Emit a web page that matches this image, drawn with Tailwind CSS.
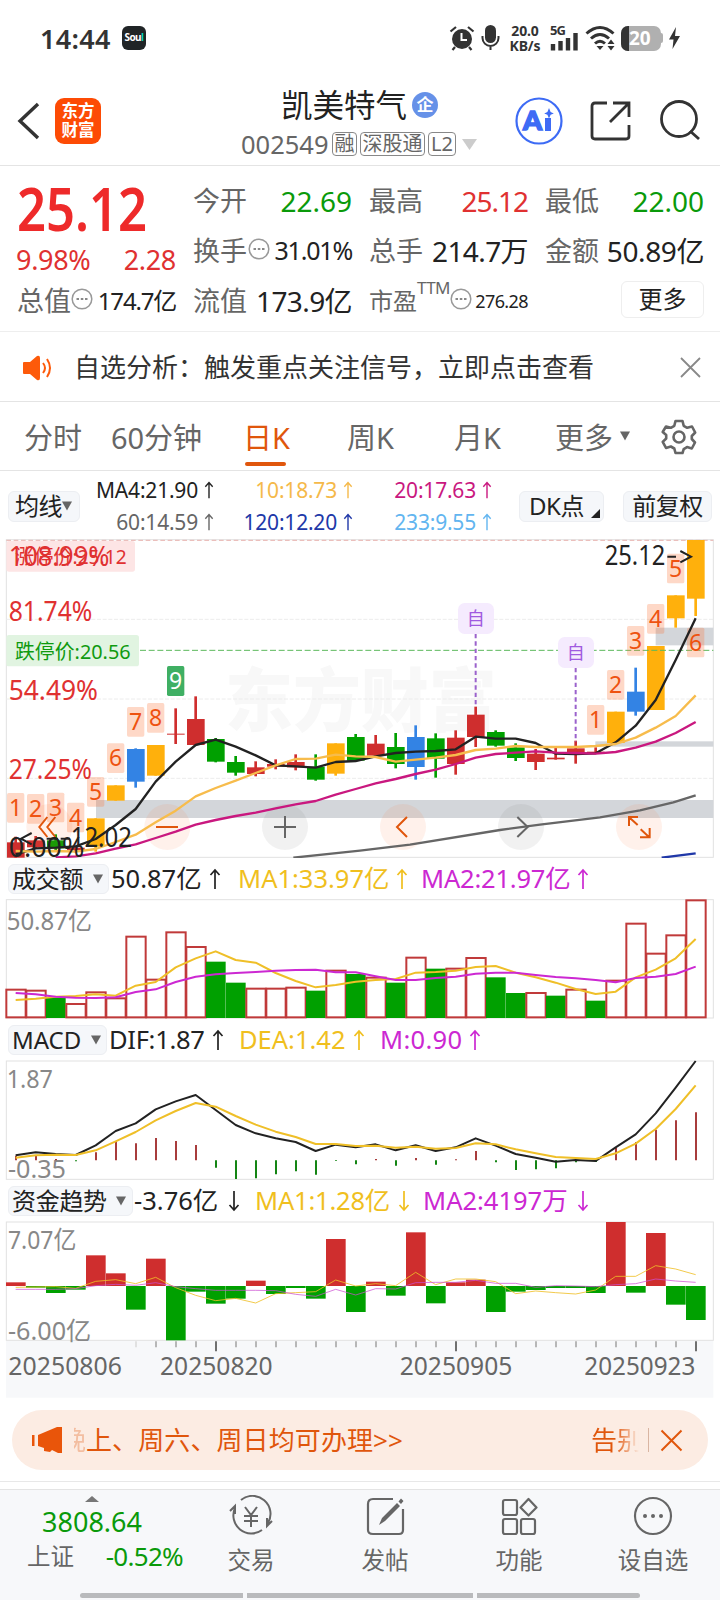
<!DOCTYPE html>
<html lang="zh-CN">
<head>
  <meta charset="UTF-8">
  <title>凯美特气 002549</title>
  <script src="https://cdn.jsdelivr.net/npm/@tailwindcss/browser@4"></script>
</head>
<body class="bg-white font-['Noto_Sans','Noto_Sans_CJK_SC',sans-serif] text-[#222]">
  <!-- Shared icons -->
  <svg class="hidden">
    <symbol id="up" viewBox="0 0 12 22"><path d="M6 21V2M1.500 7 6 2l4.500 5" fill="none" stroke="currentColor" stroke-width="1.700"/></symbol>
    <symbol id="down" viewBox="0 0 12 22"><path d="M6 1v19M1.500 15 6 20l4.500-5" fill="none" stroke="currentColor" stroke-width="1.700"/></symbol>
    <symbol id="caret" viewBox="0 0 10 9"><path d="M0 0h10L5 9z" fill="currentColor"/></symbol>
    <symbol id="more" viewBox="0 0 22 22"><circle cx="11" cy="11" r="9.800" fill="none" stroke="#999" stroke-width="1.500"/><path d="M5.500 11h2.500M9.800 11h2.500M14 11h2.500" stroke="#888" stroke-width="2.200"/></symbol>
  </svg>

  <div class="flex flex-col w-[720px] h-[1600px] overflow-hidden whitespace-nowrap">
    <!-- Status bar -->
    <div class="flex items-center h-[76px] pl-[40px] pr-[38px] text-[#333] shrink-0">
      <span class="text-[27px] font-semibold tracking-[0.3px] leading-none w-[82px]">14:44</span>
      <div class="w-[24px] h-[24px] rounded-md bg-[#202426] text-white text-[10px] font-bold leading-[23px] text-center tracking-[-0.6px]">Sou<span class="text-teal-400">l</span></div>
      <svg class="ml-[303px] w-[26px] h-[26px]" viewBox="0 0 26 26">
        <circle cx="13" cy="14" r="10" fill="#333"/>
        <path d="M1.500 6.500 7 2M24.500 6.500 19 2M6 22l-2.500 3M20 22l2.500 3" stroke="#333" stroke-width="2.200" fill="none"/>
        <path d="M12.500 8v7h5.500" stroke="#fff" stroke-width="2" fill="none"/>
      </svg>
      <svg class="ml-[6px] w-[19px] h-[26px]" viewBox="0 0 19 26">
        <rect x="4" y="0" width="11" height="18" rx="5.500" fill="#333"/>
        <path d="M1.500 11v2a8 8 0 0 0 16 0v-2M9.500 21v4" stroke="#333" stroke-width="2" fill="none"/>
      </svg>
      <div class="ml-[8px] w-[34px] text-center text-[14px] font-bold leading-[15px] tracking-[-0.1px]">20.0<br>KB/s</div>
      <svg class="ml-[8px] w-[30px] h-[28px] overflow-visible" viewBox="0 0 30 28">
        <text x="0" y="11" font-size="13" font-weight="700" fill="#333" textLength="16">5G</text>
        <path d="M3 20v6.500M10.500 17v9.500M18 14v12.500M25.500 9v17.500" stroke="#333" stroke-width="4.400"/>
      </svg>
      <svg class="ml-[5px] w-[31px] h-[27px]" viewBox="0 0 31 27">
        <path d="M1.500 8.500q13.500-12 27 0M6 13.500q9-8 18 0M10 18.500q5-4.500 10 0" stroke="#333" stroke-width="3" fill="none"/>
        <path d="m15 25-3.500-4h7zM26 14.500l3.500 4.500h-7zM26 25.500l3.500-4.500h-7z" fill="#333"/>
      </svg>
      <div class="ml-[5px] flex w-[40px] h-[25px] rounded-[7px] bg-[#b0b0b0] overflow-hidden text-white text-[19px] font-bold leading-[25px]">
        <div class="w-[8px] bg-[#333]"></div><span>20</span>
      </div>
      <div class="w-[2px] h-[10px] bg-[#b0b0b0] rounded-r"></div>
      <svg class="ml-[6px] w-[11px] h-[22px]" viewBox="0 0 11 22"><path d="M7 0 0 12.500h4.500L3.500 22 11 9H6z" fill="#333"/></svg>
    </div>

    <!-- Title bar -->
    <div class="flex h-[90px] border-b border-[#e4e4e4] shrink-0">
      <svg class="ml-[17px] mt-[26px] w-[24px] h-[38px]" viewBox="0 0 24 38"><path d="M21 2 3 19l18 17" fill="none" stroke="#333" stroke-width="3.400"/></svg>
      <div class="ml-[14px] mt-[22px] w-[46px] h-[46px] rounded-[9px] bg-[#fd4b05] text-white text-[16.500px] font-bold leading-[18.500px] text-center pt-[4px]">东方<br>财富</div>
      <div class="ml-[140px] w-[239px]">
        <div class="flex items-center ml-[40px] h-[44px] mt-[7px]">
          <span class="text-[31.500px] leading-none">凯美特气</span>
          <span class="ml-[5px] w-[26px] h-[26px] rounded-full bg-[#6691e8] text-white text-[17px] font-bold leading-[25px] text-center">企</span>
        </div>
        <div class="flex items-center h-[34px] text-[#666]">
          <span class="text-[25.500px] w-[91px]">002549</span>
          <span class="w-[25px] h-[24px] border border-[#888] rounded text-[20px] leading-[21px] text-center">融</span>
          <span class="ml-[3px] w-[65px] h-[24px] border border-[#888] rounded text-[20px] leading-[21px] text-center">深股通</span>
          <span class="ml-[3px] w-[28px] h-[24px] border border-[#888] rounded text-[20px] leading-[21px] text-center">L2</span>
          <svg class="ml-[6px] w-[15px] h-[11px] text-[#ccc]" viewBox="0 0 10 9" preserveAspectRatio="none"><path d="M0 0h10L5 9z" fill="currentColor"/></svg>
        </div>
      </div>
      <svg class="ml-[34px] mt-[21px] w-[50px] h-[50px]" viewBox="0 0 50 50">
        <circle cx="25" cy="24" r="22.500" fill="none" stroke="#3d6bf5" stroke-width="2.200"/>
        <text x="9" y="33" font-size="27" font-weight="900" fill="#3d6bf5" stroke="#3d6bf5" stroke-width="1.500" font-family="Lato" textLength="19" lengthAdjust="spacingAndGlyphs">A</text>
        <path d="M34 21v13" stroke="#3d6bf5" stroke-width="6"/><path d="m35 11 1.600 4 3.200 1.400-3.200 1.400L35 21.500l-1.600-3.700-3.200-1.400 3.200-1.400z" fill="#3d6bf5"/>
      </svg>
      <svg class="ml-[26px] mt-[25px] w-[42px] h-[42px]" viewBox="0 0 42 42" fill="none" stroke="#333" stroke-width="2.800"><path d="M17 2H5Q2 2 2 5v30q0 3 3 3h31q3 0 3-3V24M23 2h16v14M39 2 20 21"/></svg>
      <svg class="ml-[27px] mt-[23px] w-[44px] h-[44px]" viewBox="0 0 44 44" fill="none" stroke="#333" stroke-width="2.800"><circle cx="20" cy="20" r="17.500"/><path d="m31 32 9 8"/></svg>
    </div>

    <!-- Quote -->
    <div class="h-[166px] border-b border-[#eee] px-[17px] grid grid-cols-[159px_159px_159px_159px] gap-x-[17px] shrink-0 text-[#666]">
      <div class="flex flex-col text-[#ee2a2a]">
        <div class="h-[68px] pt-[14px]"><div class="text-[59px] font-semibold leading-[56px] origin-left scale-x-[0.86] w-[150px]">25.12</div></div>
        <div class="flex justify-between items-center h-[50px] pt-[2px] text-[27px] text-[#e03131] tracking-[-0.3px]"><span class="-ml-px">9.98%</span><span>2.28</span></div>
        <div class="flex items-center h-[34px] text-[#666] text-[27px]">总值<svg class="w-[22px] h-[22px] -mt-1"><use href="#more"/></svg><span class="ml-auto text-[24px] text-[#222] tracking-[-1.200px]">174.7亿</span></div>
      </div>
      <div class="flex flex-col pt-[10px] text-[27px]">
        <div class="flex justify-between items-center h-[50px]">今开<span class="text-[#0a9a0a] text-[28px]">22.69</span></div>
        <div class="flex items-center h-[50px]">换手<svg class="ml-px w-[22px] h-[22px] -mt-1"><use href="#more"/></svg><span class="ml-auto text-[25px] text-[#222] tracking-[-1.200px]">31.01%</span></div>
        <div class="flex justify-between items-center h-[50px]">流值<span class="text-[28px] text-[#222] tracking-[-0.6px]">173.9亿</span></div>
      </div>
      <div class="flex flex-col pt-[10px] text-[27px]">
        <div class="flex justify-between items-center h-[50px]">最高<span class="text-[#e03131] text-[28px] tracking-[-1px]">25.12</span></div>
        <div class="flex justify-between items-center h-[50px]">总手<span class="text-[28px] text-[#222] tracking-[-0.6px]">214.7万</span></div>
        <div class="flex items-center h-[50px] text-[24px]">市盈<span class="text-[17px] -mt-[26px] tracking-[-0.6px]">TTM</span><svg class="w-[22px] h-[22px] -mt-1"><use href="#more"/></svg><span class="ml-auto text-[18px] text-[#222] tracking-[-0.6px]">276.28</span></div>
      </div>
      <div class="flex flex-col pt-[10px] text-[27px]">
        <div class="flex justify-between items-center h-[50px]">最低<span class="text-[#0a9a0a] text-[28px]">22.00</span></div>
        <div class="flex justify-between items-center h-[50px]">金额<span class="text-[28px] text-[#222] tracking-[-0.4px]">50.89亿</span></div>
        <div class="ml-auto mt-[5px] w-[83px] h-[37px] border border-[#eee] rounded-md text-[24px] leading-[33px] text-center text-[#222]">更多</div>
      </div>
    </div>

    <!-- Signal notice -->
    <div class="flex items-center h-[70px] border-b border-[#e4e4e4] pl-[22px] pr-[19px] pt-[2px] shrink-0">
      <svg class="w-[31px] h-[26px]" viewBox="0 0 31 26"><path d="M1 8q0-1 1-1h6l7-6q3-1 3 2v20q0 3-3 2l-7-6H2q-1 0-1-1z" fill="#fd5a0a"/><path d="M21 8q4 5 0 10M25 4q6 9 0 18" stroke="#fd5a0a" stroke-width="2" fill="none"/></svg>
      <span class="ml-[21px] text-[26px] text-[#333]">自选分析：触发重点关注信号，立即点击查看</span>
      <svg class="ml-auto w-[21px] h-[21px]" viewBox="0 0 21 21"><path d="m1 1 19 19M20 1 1 20" stroke="#888" stroke-width="1.800"/></svg>
    </div>

    <!-- Period tabs -->
    <div class="flex items-center h-[69px] border-b border-[#e4e4e4] pl-[24px] shrink-0 text-[29px] text-[#666]">
      <span class="w-[87px] pt-[3px]">分时</span>
      <span class="w-[132px] pt-[3px] tracking-[-0.1px]">60分钟</span>
      <div class="w-[104px] h-full flex flex-col text-[#e0560c]"><span class="h-[60px] leading-[71px]">日K</span><div class="ml-[2px] w-[41px] h-[4px] rounded bg-[#e0560c]"></div></div>
      <span class="w-[107px] pt-[3px]">周K</span>
      <span class="w-[101px] pt-[3px]">月K</span>
      <span class="w-[65px] pt-[3px]">更多</span>
      <svg class="w-[10px] h-[10px]"><use href="#caret"/></svg>
      <svg class="ml-[31px] mt-[2px] w-[36px] h-[36px]" viewBox="0 0 36 36" fill="none" stroke="#666" stroke-width="2.600" stroke-linejoin="round"><path d="M14.500 2h7l1.200 4.800 3.500 2 4.800-1.300 3.200 6-3.400 3.500v3l3.200 3.500-3.200 6-4.800-1.400-3.300 2L21.500 34h-7l-1.200-4.500-3.500-2L5 28.900l-3.300-6 3.500-3.400v-3.500L1.700 13l3.300-5.500 4.800 1.300 3.500-2z"/><circle cx="18" cy="18" r="5.500"/></svg>
    </div>

    <!-- Moving averages -->
    <div class="flex items-center h-[68px] shrink-0 pl-[8px]">
      <div class="flex items-center w-[72px] h-[31px] mt-[2px] rounded-md bg-[#f5f7fa] border border-[#eceef2] pl-[6px] text-[24px] tracking-[-0.5px]">均线<svg class="w-[10px] h-[10px] text-[#666]"><use href="#caret"/></svg></div>
      <div class="w-[414px] grid grid-cols-[134px_139px_139px] text-right text-[21px] leading-[32px] tracking-[-0.2px] pt-[1px]">
        <div>MA4:21.90<svg class="inline -mt-1 ml-[6px] w-[10px] h-[18px]"><use href="#up"/></svg></div>
        <div class="text-[#f5b94a]">10:18.73<svg class="inline -mt-1 ml-[6px] w-[10px] h-[18px]"><use href="#up"/></svg></div>
        <div class="text-[#c9187f]">20:17.63<svg class="inline -mt-1 ml-[6px] w-[10px] h-[18px]"><use href="#up"/></svg></div>
        <div class="text-[#666]">60:14.59<svg class="inline -mt-1 ml-[6px] w-[10px] h-[18px]"><use href="#up"/></svg></div>
        <div class="text-[#2038a8]">120:12.20<svg class="inline -mt-1 ml-[6px] w-[10px] h-[18px]"><use href="#up"/></svg></div>
        <div class="text-[#62b5f0]">233:9.55<svg class="inline -mt-1 ml-[6px] w-[10px] h-[18px]"><use href="#up"/></svg></div>
      </div>
      <div class="flex items-center ml-[25px] mt-[2px] w-[85px] h-[31px] rounded-md bg-[#f5f7fa] border border-[#eceef2] pl-[9px] text-[24px] tracking-[-0.4px]">DK点<svg class="ml-[7px] mt-[14px] w-[9px] h-[9px]" viewBox="0 0 9 9"><path d="M9 0v9H0z" fill="#222"/></svg></div>
      <div class="ml-[19px] mt-[2px] w-[89px] h-[31px] rounded-md bg-[#f5f7fa] border border-[#eceef2] text-[24px] leading-[27px] text-center tracking-[-0.5px]">前复权</div>
    </div>

    <!-- Candles, three units per pixel -->
    <svg class="w-[720px] h-[319px] shrink-0" viewBox="0 12 2160 957" id="kline"></svg>

    <!-- Turnover -->
    <div class="flex items-center h-[41px] shrink-0 pl-[8px] text-[25.500px]">
      <div class="flex items-center w-[101px] h-[30px] rounded-md bg-[#f5f7fa] border border-[#eceef2] pl-[3px] text-[24px] tracking-[-0.3px]">成交额<svg class="ml-auto mr-[5px] w-[10px] h-[10px] text-[#666]"><use href="#caret"/></svg></div>
      <div class="flex items-center ml-[2px] w-[127px]">50.87亿<svg class="ml-[7px] w-[12px] h-[22px]"><use href="#up"/></svg></div>
      <div class="flex items-center w-[183px] text-[#f0bf1e]">MA1:33.97亿<svg class="ml-[6px] w-[12px] h-[22px]"><use href="#up"/></svg></div>
      <div class="flex items-center text-[#cc28d2] tracking-[-0.2px]">MA2:21.97亿<svg class="ml-[6px] w-[12px] h-[22px]"><use href="#up"/></svg></div>
    </div>
    <svg class="w-[720px] h-[120px] shrink-0" viewBox="0 118 2160 360" id="volume"></svg>

    <!-- MACD -->
    <div class="flex items-center h-[41px] shrink-0 pl-[8px] text-[25.500px]">
      <div class="flex items-center w-[99px] h-[30px] rounded-md bg-[#f5f7fa] border border-[#eceef2] pl-[3px] text-[24px]">MACD<svg class="ml-auto mr-[5px] w-[10px] h-[10px] text-[#666]"><use href="#caret"/></svg></div>
      <div class="flex items-center ml-[2px] w-[130px] tracking-[-0.3px]">DIF:1.87<svg class="ml-[7px] w-[12px] h-[22px]"><use href="#up"/></svg></div>
      <div class="flex items-center w-[141px] text-[#f0bf1e]">DEA:1.42<svg class="ml-[7px] w-[12px] h-[22px]"><use href="#up"/></svg></div>
      <div class="flex items-center text-[#cc28d2] tracking-[0.3px]">M:0.90<svg class="ml-[7px] w-[12px] h-[22px]"><use href="#up"/></svg></div>
    </div>
    <svg class="w-[720px] h-[120px] shrink-0" viewBox="0 600 2160 360" id="macd"></svg>

    <!-- Fund flow -->
    <div class="flex items-center h-[41px] shrink-0 pl-[8px] text-[25.500px]">
      <div class="flex items-center w-[125px] h-[30px] rounded-md bg-[#f5f7fa] border border-[#eceef2] pl-[3px] text-[24px] tracking-[-0.3px]">资金趋势<svg class="ml-auto mr-[6px] w-[10px] h-[10px] text-[#666]"><use href="#caret"/></svg></div>
      <div class="flex items-center ml-[1px] w-[121px]">-3.76亿<svg class="ml-[10px] w-[12px] h-[22px]"><use href="#down"/></svg></div>
      <div class="flex items-center w-[168px] text-[#f0bf1e] tracking-[-0.2px]">MA1:1.28亿<svg class="ml-[8px] w-[12px] h-[22px]"><use href="#down"/></svg></div>
      <div class="flex items-center text-[#cc28d2]">MA2:4197万<svg class="ml-[9px] w-[12px] h-[22px]"><use href="#down"/></svg></div>
    </div>
    <svg class="w-[720px] h-[177px] shrink-0" viewBox="0 123 2160 531" id="fund"></svg>

    <!-- Promo -->
    <div class="flex items-center mx-[12px] mt-[12px] h-[60px] rounded-full bg-[#fcece3] text-[#e0560c] text-[26px] shrink-0">
      <svg class="ml-[20px] w-[30px] h-[28px]" viewBox="0 0 30 28" fill="#e9550a"><path d="M0 9h2.500v11H0zM6 9l19-8h5v26h-4l-6-3-2 2-6-1v-3l-6-2z"/></svg>
      <div class="ml-[12px] w-[12px] flex justify-end overflow-hidden opacity-30">晚</div>
      <span class="tracking-[0.1px]">上、周六、周日均可办理&gt;&gt;</span>
      <div class="ml-auto flex w-[48px] overflow-hidden bg-linear-to-r from-[#e0560c] from-50% to-transparent bg-clip-text text-transparent">告别</div>
      <div class="ml-[9px] w-px h-[24px] bg-[#d9b5a2]"></div>
      <svg class="ml-[11px] mr-[25px] w-[23px] h-[23px]" viewBox="0 0 23 23"><path d="m1.500 1.500 20 20M21.500 1.500l-20 20" stroke="#e0560c" stroke-width="2"/></svg>
    </div>

    <!-- Bottom bar -->
    <div class="mt-[11px] h-[8px] border-t border-[#e8e8e8] shrink-0"></div>
    <div class="relative flex h-[111px] bg-[#f7f8fa] border-t border-[#e4e4e4] shrink-0 text-[#666] text-[23.500px]">
      <div class="w-[184px] flex flex-col items-center text-[#0a9a0a]">
        <svg class="mt-[6px] w-[14px] h-[6px]" viewBox="0 0 14 6"><path d="M7 0l7 6H0z" fill="#777"/></svg>
        <span class="h-[36px] leading-[40px] text-[27px]">3808.64</span>
        <div class="flex justify-between w-[156px] leading-[36px] ml-[26px]"><span class="text-[#666]">上证</span><span class="text-[26px] tracking-[-0.7px]">-0.52%</span></div>
      </div>
      <div class="w-[134px] flex flex-col items-center">
        <svg class="mt-[5px] w-[46px] h-[42px]" viewBox="0 0 46 42" fill="none" stroke="#666" stroke-width="2"><path d="M13 5A18 18 0 0 1 40 28m4-2-5 5v-8M34 35A18 18 0 0 1 7 13m-5 3 5-5v8M17 12l6 8 6-8M23 20v12M16 21h14M16 26h14"/></svg>
        <span class="leading-[47px]">交易</span>
      </div>
      <div class="w-[134px] flex flex-col items-center">
        <svg class="mt-[5px] w-[40px] h-[42px]" viewBox="0 0 40 42" fill="none" stroke="#666" stroke-width="2.200"><path d="M28 4H8Q3 4 3 9v26q0 4 5 4h26q4 0 4-4V14"/><path d="m14 30 3-7L32 8l3 3-15 15zM33.500 6.500 36 3.500l2.500 2.500-2.500 3z" fill="#666" stroke="none"/></svg>
        <span class="leading-[47px]">发帖</span>
      </div>
      <div class="w-[134px] flex flex-col items-center">
        <svg class="mt-[5px] w-[38px] h-[42px]" viewBox="0 0 38 42" fill="none" stroke="#666" stroke-width="2.200"><rect x="3" y="5" width="14" height="15" rx="2"/><rect x="3" y="24" width="14" height="15" rx="2"/><rect x="21" y="24" width="14" height="15" rx="2"/><path d="m28.500 4 8 8.500-8 8-8-8z" stroke-linejoin="round"/></svg>
        <span class="leading-[47px]">功能</span>
      </div>
      <div class="w-[134px] flex flex-col items-center">
        <svg class="mt-[5px] w-[42px] h-[42px]" viewBox="0 0 42 42" fill="none" stroke="#666" stroke-width="2.200"><circle cx="21" cy="21" r="18"/><path d="M13 21h.01M21 21h.01M29 21h.01" stroke-width="4" stroke-linecap="round"/></svg>
        <span class="leading-[47px]">设自选</span>
      </div>
      <div class="absolute left-[80px] bottom-[2px] w-[560px] h-[5px] grid grid-cols-[163px_226px_163px] gap-[4px]">
        <div class="bg-[#b9babc] rounded-l-full"></div><div class="bg-[#b9babc]"></div><div class="bg-[#b9babc] rounded-r-full"></div>
      </div>
    </div>
  </div>

  <script>
    const RED = '#cf2e2e', GREEN = '#00a000', GOLD = '#ffb00c', BLUE = '#3383e4';
    const cx = i => 47 + i * 60;
    const rect = (x, y, w, h, fill, extra = '') => `<rect x="${x}" y="${y}" width="${w}" height="${h}" fill="${fill}" ${extra}/>`;
    const seg = (x1, y1, x2, y2, stroke, w = 3, extra = '') => `<line x1="${x1}" y1="${y1}" x2="${x2}" y2="${y2}" stroke="${stroke}" stroke-width="${w}" ${extra}/>`;
    const series = (ys, stroke, w = 6, from = 0) => `<polyline points="${ys.map((y, i) => cx(i + from) + ',' + y).join(' ')}" fill="none" stroke="${stroke}" stroke-width="${w}" stroke-linejoin="round"/>`;
    const label = (x, y, w, s, fill, size = 80, extra = '') => `<text x="${x}" y="${y}" font-size="${size}" fill="${fill}" textLength="${w}" lengthAdjust="spacingAndGlyphs" ${extra}>${s}</text>`;
    const frame = (top, bottom) => rect(19, top, 2121, bottom - top, 'none', 'stroke="#e2e2e2" stroke-width="3"');

    // color, body top, body bottom, high, low
    const candles = [
      [RED, 922, 968, 905, 968], [RED, 916, 937, 903, 942], [GREEN, 916, 940, 898, 946], [RED, 938, 946, 932, 952],
      [GOLD, 850, 935, 850, 950], [GOLD, 751, 797, 751, 797], [BLUE, 642, 740, 640, 758], [GOLD, 630, 722, 630, 722],
      [RED, 596, 599, 520, 627], [RED, 552, 630, 484, 630], [GREEN, 612, 680, 609, 682], [GREEN, 681, 713, 663, 722],
      [RED, 697, 717, 679, 724], [RED, 687, 695, 673, 703], [RED, 681, 697, 658, 706], [GREEN, 695, 734, 658, 737],
      [GOLD, 625, 716, 625, 722], [GREEN, 606, 677, 597, 677], [RED, 626, 662, 600, 665], [GREEN, 636, 687, 594, 700],
      [BLUE, 606, 696, 571, 734], [GREEN, 610, 671, 595, 728], [RED, 608, 687, 586, 719], [RED, 539, 606, 515, 636],
      [GREEN, 591, 632, 586, 635], [GREEN, 637, 669, 625, 678], [RED, 656, 681, 642, 705], [RED, 668, 673, 638, 674],
      [RED, 640, 655, 617, 686], [RED, 650, 655, 637, 655], [GOLD, 530, 624, 530, 624], [BLUE, 470, 530, 398, 542],
      [GOLD, 333, 525, 333, 525], [GOLD, 181, 250, 181, 278], [GOLD, 15, 191, 15, 243]
    ];
    const marks = [[0, 774, 1], [1, 777, 2], [2, 773, 3], [3, 803, 4], [4, 726, 5], [5, 625, 6], [6, 516, 7], [7, 504, 8],
      [29, 510, 1], [30, 405, 2], [31, 273, 3], [32, 207, 4], [33, 56, 5], [34, 278, 6]];

    let k = label(675, 572, 815, '东方财富', '#f8f8f8', 208, 'font-weight="900"');
    k += frame(14, 967);
    [253, 492, 730].forEach(y => k += seg(19, y, 2140, y, '#ececec', 3, 'stroke-dasharray="12 5"'));
    k += seg(19, 16, 2140, 16, '#e8b4b0', 3, 'stroke-dasharray="14 8"');
    k += rect(19, 18, 386, 92, '#fde5e5', 'rx="8"') + label(45, 87, 335, '涨停价:25.12', '#e03131', 62);
    k += rect(288, 795, 1852, 54, '#d3d6da') + rect(1786, 619, 354, 16, '#d3d6da') + rect(1967, 278, 173, 53, '#d3d6da');
    candles.forEach(([c, t, b, h, l], i) => k += seg(cx(i), h, cx(i), l, c, 8) + rect(cx(i) - 26, t, 53, b - t, c));
    k += seg(420, 346, 2140, 346, '#5cb85c', 3, 'stroke-dasharray="18 8"');
    k += rect(19, 300, 398, 94, '#e1f4e1', 'rx="8"') + label(45, 371, 347, '跌停价:20.56', '#0f9a0f', 62);
    marks.forEach(([i, y, n]) => k += rect(cx(i) - 26, y, 52, 89, '#fb7436', 'rx="5" fill-opacity=".28"') + `<text x="${cx(i)}" y="${y + 69}" font-size="69" text-anchor="middle" fill="#ee5210">${n}</text>`);
    k += rect(501, 393, 52, 90, '#3faf63', 'rx="5"') + '<text x="527" y="462" font-size="69" text-anchor="middle" fill="#fff">9</text>';
    // tool buttons
    [148, 502, 855, 1209, 1563, 1917].forEach((x, i) => k += `<circle cx="${x}" cy="876" r="69" fill="${i === 2 || i === 4 ? '#777' : '#fb7436'}" fill-opacity=".1"/>`);
    k += '<g fill="none" stroke="#e0560c" stroke-width="6"><path d="M142 846l-24 30 24 30M166 846l-24 30 24 30M468 876h66M1221 846l-30 30 30 30M1887 873v-27h27M1889 848l24 22M1949 879v28h-29M1946 905l-24-22"/></g>';
    k += '<path d="M822 876h66M855 843v66M1552 846l31 30-31 30" fill="none" stroke="#666" stroke-width="6"/>';
    k += '<polyline points="880,968 1080,947 1230,929 1500,885 1620,869 1800,847 1920,826 2020,802 2087,781" fill="none" stroke="#666" stroke-width="7"/>';
    k += seg(1985, 968, 2087, 955, '#2038a8', 7);
    k += series([958, 940, 938, 934, 912, 870, 822, 740, 680, 630, 614, 635, 661, 691, 694, 698, 681, 678, 664, 654, 650, 648, 643, 605, 611, 611, 624, 656, 657, 655, 622, 572, 495, 375, 250], '#222', 7);
    k += series([948, 950, 948, 950, 942, 921, 899, 862, 827, 784, 759, 737, 714, 691, 672, 671, 659, 664, 666, 680, 674, 668, 660, 645, 641, 633, 636, 636, 636, 633, 627, 608, 578, 543, 481], '#f7bc4c', 7);
    k += series([967, 964, 955, 941, 928, 909, 890, 869, 855, 843, 833, 820, 808, 798, 779, 762, 745, 732, 717, 704, 687, 668, 657, 653, 649, 653, 654, 656, 651, 638, 620, 594, 561], '#c9187f', 7, 2);
    [[1427, 204, 515], [1727, 306, 620]].forEach(([x, y, end]) => k += rect(x - 53, y, 108, 93, '#f5ebfe', 'rx="20"')
      + `<text x="${x}" y="${y + 67}" font-size="54" text-anchor="middle" fill="#a05ae0">自</text>` + seg(x, y + 93, x, end, '#9b62cc', 6, 'stroke-dasharray="13 9"'));
    k += label(26, 92, 302, '108.99%', '#e03131') + label(26, 257, 251, '81.74%', '#e03131') + label(26, 494, 268, '54.49%', '#e03131') + label(26, 733, 250, '27.25%', '#e03131') + label(26, 965, 227, '0.00%', '#222');
    k += label(212, 935, 184, '12.02', '#222') + label(1814, 91, 182, '25.12', '#222');
    k += '<path d="M95 894l-32 17 32 17M140 911h34M182 911h28M2002 65h26M2041 48l32 17-32 17" fill="none" stroke="#222" stroke-width="6"/>';
    document.getElementById('kline').innerHTML = k;

    // turnover
    const vol = [390, 393, -414, 433, 398, 416, 231, 360, 218, 262, -306, -369, 387, 387, 384, -393, 333, -343, 354, -369, 294, -327, 327, 295, -353, -400, 400, -408, 390, -423, 363, 192, 282, 227, 122];
    let v = frame(120, 475);
    vol.forEach((t, i) => v += t < 0 ? rect(cx(i) - 29, -t, 59, 475 + t, GREEN) : rect(cx(i) - 28, t, 58, 473 - t, '#fff', 'stroke="#c03a3a" stroke-width="6"'));
    v += series([421, 417, 411, 409, 404, 408, 378, 367, 323, 296, 275, 301, 309, 340, 364, 383, 376, 366, 361, 358, 339, 337, 333, 322, 319, 339, 353, 369, 388, 403, 396, 353, 330, 296, 238], '#efbf28');
    v += series([400, 404, 411, 414, 415, 413, 397, 389, 367, 351, 344, 340, 337, 333, 331, 330, 338, 338, 350, 361, 361, 355, 351, 342, 339, 339, 346, 352, 356, 361, 368, 355, 351, 343, 321], '#cc28d2');
    v += label(20, 210, 256, '50.87亿', '#888', 76);
    document.getElementById('volume').innerHTML = v;

    // macd
    const hist = [887, 887, 897, 904, 877, 843, 850, 834, 843, 855, 923, 957, 955, 943, 934, 944, 903, 913, 897, 917, 894, 914, 898, 873, 907, 930, 928, 925, 907, 906, 864, 846, 809, 781, 757];
    let m = frame(603, 958) + label(20, 685, 139, '1.87', '#888', 76) + label(24, 954, 174, '-0.35', '#888', 76);
    hist.forEach((y, i) => m += seg(cx(i) + 1, 901, cx(i) + 1, y, y < 901 ? '#a83c3c' : '#148514', 6));
    m += series([886, 877, 882, 885, 856, 813, 790, 748, 724, 705, 750, 795, 820, 835, 846, 873, 854, 862, 853, 871, 856, 873, 862, 835, 857, 882, 893, 905, 900, 903, 862, 823, 760, 683, 603], '#222');
    m += series([893, 886, 884, 885, 871, 844, 816, 781, 753, 729, 740, 768, 794, 815, 831, 852, 852, 858, 857, 863, 860, 866, 864, 850, 853, 868, 880, 891, 894, 897, 880, 851, 807, 747, 676], '#efbf28');
    document.getElementById('macd').innerHTML = m;

    // fund flow
    const flow = [307, 323, 339, 329, 226, 280, 389, 236, 481, 335, 371, 356, 302, 342, 324, 356, 177, 396, 305, 347, 157, 370, 307, 299, 396, 335, 330, 324, 324, 339, 126, 338, 159, 374, 420];
    let f = frame(126, 481) + rect(18, 483, 2122, 170, '#f7f8fa');
    f += label(24, 208, 205, '7.07亿', '#888', 76) + label(24, 480, 250, '-6.00亿', '#888', 76);
    flow.forEach((y, i) => f += rect(cx(i) - 29, Math.min(y, 318), 59, Math.abs(y - 318), y < 318 ? RED : GREEN));
    f += series([322, 321, 320, 325, 304, 299, 311, 292, 323, 346, 362, 355, 369, 341, 338, 335, 300, 318, 311, 317, 277, 314, 297, 297, 305, 341, 333, 338, 342, 330, 289, 289, 257, 267, 284], '#efbf28', 2.5);
    f += series([328, 328, 328, 326, 317, 313, 316, 308, 320, 326, 331, 331, 331, 332, 343, 349, 328, 345, 326, 327, 308, 307, 307, 301, 310, 310, 322, 317, 318, 320, 314, 311, 297, 303, 307], '#cc50d2', 2.2);
    for (let i = 6; i < 35; i++) {
      const major = i === 10 || i === 22 || i === 34;
      f += seg(cx(i) + 1, 484, cx(i) + 1, major ? 514 : 502, major ? '#555' : i === 6 ? '#ddd' : '#aaa', 5);
    }
    f += label(25, 585, 341, '20250806', '#666', 75) + label(480, 585, 338, '20250820', '#666', 75) + label(1199, 585, 338, '20250905', '#666', 75) + label(1753, 585, 333, '20250923', '#666', 75);
    document.getElementById('fund').innerHTML = f;
  </script>
</body>
</html>
